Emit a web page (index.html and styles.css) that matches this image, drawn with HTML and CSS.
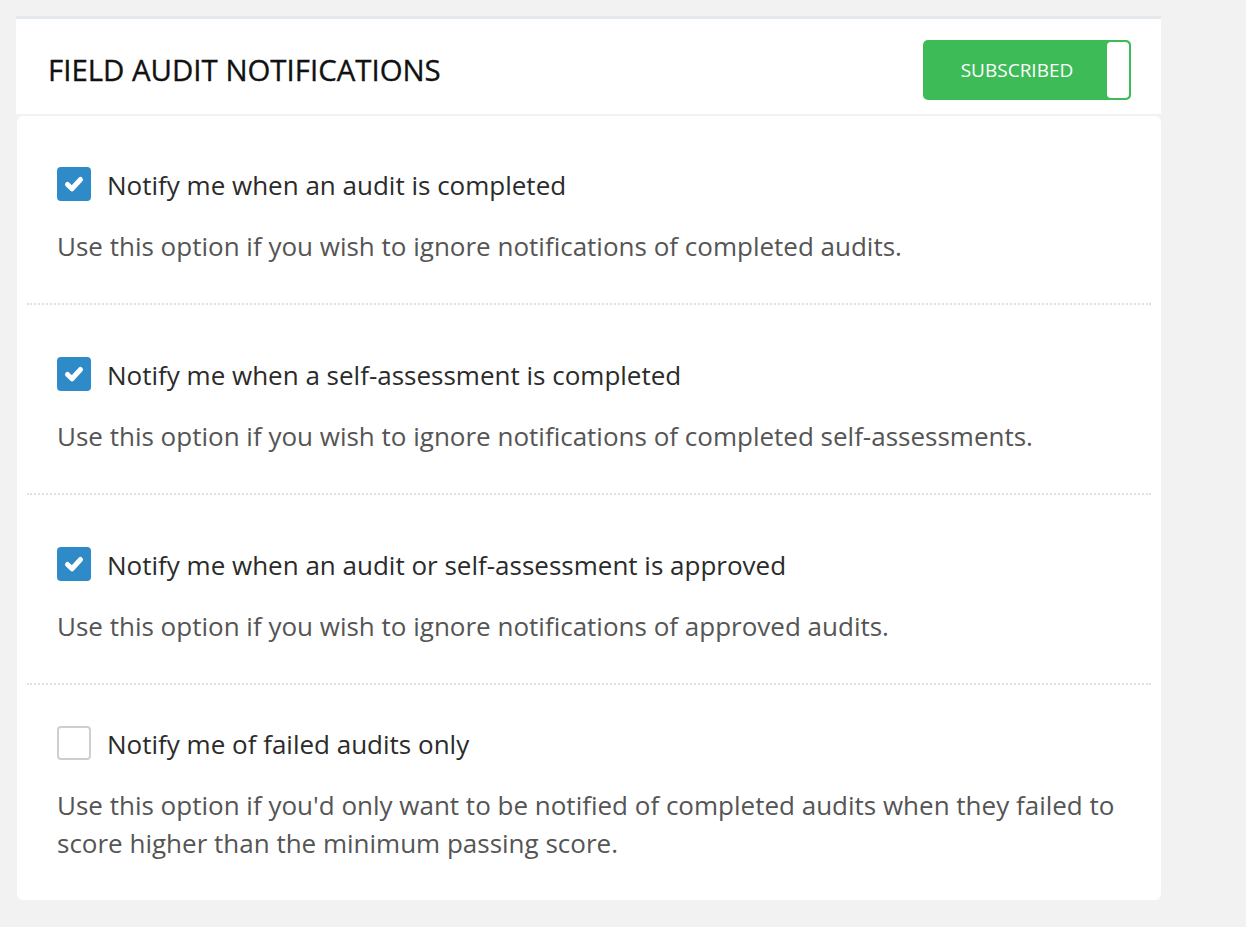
FILE: index.html
```html
<!DOCTYPE html>
<html lang="en">
<head>
<meta charset="utf-8">
<title>Field Audit Notifications</title>
<link rel="stylesheet" href="styles.css">
</head>
<body>
<div class="panel">
  <div class="panel-header">
    <h2 class="panel-title">FIELD AUDIT NOTIFICATIONS</h2>
    <div class="toggle">
      <span class="toggle-label">SUBSCRIBED</span>
      <span class="toggle-knob"></span>
    </div>
  </div>
  <div class="card">
    <div class="option option--first">
      <label class="option-row">
        <span class="checkbox checkbox--on"><svg viewBox="0 0 34 34" width="34" height="34"><path d="M10.5 17.5 L15 21.8 L23.5 12.5" fill="none" stroke="#fff" stroke-width="5" stroke-linecap="round" stroke-linejoin="round"/></svg></span>
        <span class="option-label">Notify me when an audit is completed</span>
      </label>
      <p class="option-desc">Use this option if you wish to ignore notifications of completed audits.</p>
    </div>
    <div class="option">
      <label class="option-row">
        <span class="checkbox checkbox--on"><svg viewBox="0 0 34 34" width="34" height="34"><path d="M10.5 17.5 L15 21.8 L23.5 12.5" fill="none" stroke="#fff" stroke-width="5" stroke-linecap="round" stroke-linejoin="round"/></svg></span>
        <span class="option-label">Notify me when a self-assessment is completed</span>
      </label>
      <p class="option-desc">Use this option if you wish to ignore notifications of completed self-assessments.</p>
    </div>
    <div class="option">
      <label class="option-row">
        <span class="checkbox checkbox--on"><svg viewBox="0 0 34 34" width="34" height="34"><path d="M10.5 17.5 L15 21.8 L23.5 12.5" fill="none" stroke="#fff" stroke-width="5" stroke-linecap="round" stroke-linejoin="round"/></svg></span>
        <span class="option-label">Notify me when an audit or self-assessment is approved</span>
      </label>
      <p class="option-desc">Use this option if you wish to ignore notifications of approved audits.</p>
    </div>
    <div class="option option--last">
      <label class="option-row">
        <span class="checkbox"></span>
        <span class="option-label">Notify me of failed audits only</span>
      </label>
      <p class="option-desc">Use this option if you'd only want to be notified of completed audits when they failed to score higher than the minimum passing score.</p>
    </div>
  </div>
</div>
</body>
</html>
```
FILE: styles.css
```css
html, body {
  margin: 0;
  padding: 0;
}
body {
  background: #f2f2f2;
  font-family: "Open Sans", "Noto Sans", sans-serif;
  padding: 16px 0 0 16px;
  height: 927px;
  box-sizing: border-box;
}
.panel {
  width: 1145px;
}
.panel-header {
  box-sizing: border-box;
  height: 98px;
  border-top: 3px solid #e5e9ed;
  background: #fff;
  display: flex;
  align-items: center;
  justify-content: space-between;
  padding: 7px 30px 0 32px;
}
.panel-title {
  margin: 0;
  font-size: 29.4px;
  font-weight: 400;
  color: #111;
  letter-spacing: 0;
  -webkit-text-stroke: 0.35px #111;
}
.toggle {
  box-sizing: border-box;
  width: 208px;
  height: 60px;
  background: #3dbb57;
  border-radius: 5px;
  display: flex;
  align-items: stretch;
  padding: 2px;
}
.toggle-label {
  flex: 1;
  display: flex;
  align-items: center;
  justify-content: center;
  color: #fff;
  font-size: 19px;
  padding-left: 2px;
}
.toggle-knob {
  width: 22px;
  background: #fff;
  border-radius: 4px;
}
.card {
  margin: 2px 0 0 1px;
  background: #fff;
  border-radius: 6px;
  padding: 0 10px;
}
.option {
  padding: 52px 30px 38px;
  border-bottom: 2px dotted #e0e0e0;
}
.option--first {
  padding-top: 51px;
}
.option--last {
  padding-top: 41px;
  border-bottom: none;
}
.option-row {
  display: flex;
  align-items: center;
  gap: 16px;
}
.checkbox {
  box-sizing: border-box;
  width: 34px;
  height: 34px;
  border-radius: 4px;
  border: 2px solid #cfcfcf;
  background: #fff;
  flex: none;
  display: flex;
}
.checkbox--on {
  background: #2f8bc8;
  border: none;
}
.option-label {
  font-size: 26px;
  color: #2b2b2b;
  line-height: 34px;
  position: relative;
  top: 1px;
}
.option-desc {
  margin: 26px 0 0;
  font-size: 26px;
  line-height: 38px;
  color: #555;
}
```
